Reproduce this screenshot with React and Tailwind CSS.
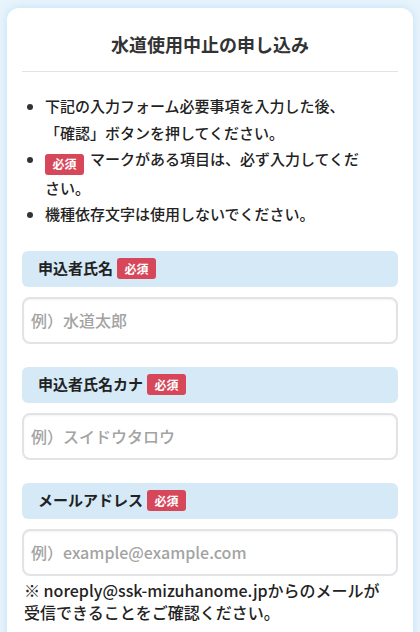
import React from 'react';

function Hissu() {
  return (
    <span className="inline-flex h-[21px] w-[39px] items-center justify-center rounded-[3px] bg-[#d6475a] text-[12px] font-bold leading-none text-white">
      必須
    </span>
  );
}

function Field({ label, placeholder }) {
  return (
    <div className="mt-[23px]">
      <div className="flex h-[36px] items-center gap-[4px] rounded-[6px] bg-[#d5e9f7] pl-[16px] text-[15px] font-bold text-[#222]">
        <span>{label}</span>
        <Hissu />
      </div>
      <input
        type="text"
        placeholder={placeholder}
        className="mt-[10px] block h-[47px] w-full rounded-[8px] border-2 border-[#e2e3e6] bg-white px-[7px] text-[16px] font-medium text-[#333] shadow-[inset_0_1px_2px_rgba(0,0,0,0.05)] outline-none placeholder:text-[#a3a3a3]"
      />
    </div>
  );
}

export default function App() {
  return (
    <div
      className="min-h-screen bg-[#e8f4fc] px-[7px] pt-[8px]"
      style={{ fontFamily: '"Noto Sans CJK JP", "Noto Sans", sans-serif' }}
    >
      <div className="rounded-t-[12px] bg-white px-[15px] pb-[40px] pt-[22px] shadow-[0_0_10px_rgba(170,210,240,0.6)]">
        <h1 className="text-center text-[18px] font-bold leading-[28px] text-[#333]">
          水道使用中止の申し込み
        </h1>
        <hr className="mt-[13px] border-t border-[#e3e3e3]" />

        <ul className="mt-[21px] list-disc pl-[23px] pr-[30px] text-[15px] font-medium leading-[26.5px] text-[#222] marker:text-[#333]">
          <li>
            下記の入力フォーム必要事項を入力した後、
            <br />
            「確認」ボタンを押してください。
          </li>
          <li>
            <span className="mr-[6px] inline-flex align-[-4px]">
              <Hissu />
            </span>
            マークがある項目は、必ず入力してください。
          </li>
          <li>機種依存文字は使用しないでください。</li>
        </ul>

        <Field label="申込者氏名" placeholder="例）水道太郎" />
        <Field label="申込者氏名カナ" placeholder="例）スイドウタロウ" />
        <Field label="メールアドレス" placeholder="例）example@example.com" />

        <p className="mt-[3px] pl-[2px] pr-[10px] text-[16px] font-medium leading-[22px] text-[#222]">
          ※ noreply@ssk-mizuhanome.jpからのメールが受信できることをご確認ください。
        </p>
      </div>
    </div>
  );
}
